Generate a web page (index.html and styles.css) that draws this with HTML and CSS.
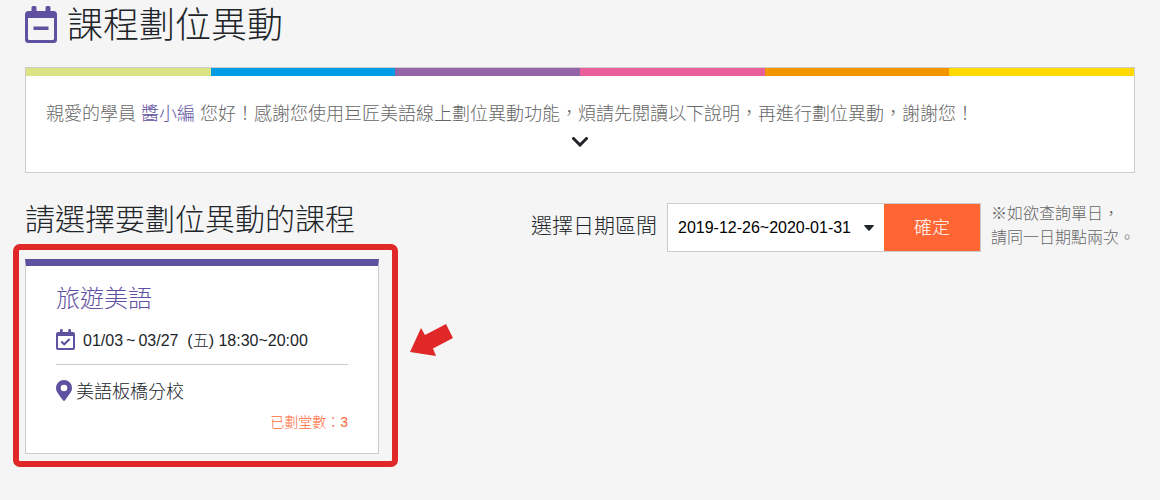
FILE: index.html
```html
<!DOCTYPE html>
<html lang="zh-Hant-TW">
<head>
<meta charset="utf-8">
<title>課程劃位異動</title>
<meta name="viewport" content="width=device-width, initial-scale=1">
<link rel="stylesheet" href="styles.css">
</head>
<body>
<main class="page">
  <header class="page-header">
    <svg class="page-icon" viewBox="0 0 32 37" aria-hidden="true">
      <path fill-rule="evenodd" d="M6.500 1.500Q6.500 0 8 0h2Q11.500 0 11.500 1.500V5h9V1.500Q20.500 0 22 0h2Q25.500 0 25.500 1.500V5h3Q32 5 32 8.500v25Q32 37 28.500 37h-25Q0 37 0 33.500v-25Q0 5 3.500 5h3zM3 12v20.500q0 1.500 1.500 1.500h23q1.500 0 1.500-1.500V12zM8.500 20.500h15v3.500h-15z"/>
    </svg>
    <h1 class="page-title">課程劃位異動</h1>
  </header>

  <section class="notice">
    <div class="stripes" aria-hidden="true">
      <span class="stripe lime"></span><span class="stripe blue"></span><span class="stripe purple"></span><span class="stripe pink"></span><span class="stripe orange"></span><span class="stripe yellow"></span>
    </div>
    <p class="notice-text">親愛的學員 <span class="student">醬小編</span> 您好！感謝您使用巨匠美語線上劃位異動功能，煩請先閱讀以下說明，再進行劃位異動，謝謝您！</p>
    <button class="expand" type="button" aria-label="展開說明">
      <svg class="chevron" viewBox="0 0 16 10" aria-hidden="true"><path d="M1.500 1.500L8 8l6.500-6.500"/></svg>
    </button>
  </section>

  <section class="toolbar">
    <h2 class="section-title">請選擇要劃位異動的課程</h2>
    <form class="filter">
      <label class="filter-label" for="range">選擇日期區間</label>
      <div class="range-group">
        <div class="select-wrap">
          <select class="range" id="range"><option>2019-12-26~2020-01-31</option></select>
          <svg class="caret" viewBox="0 0 10 6" aria-hidden="true"><path d="M.8 0h8.400q1.200 0 .4 1L5.700 5.500q-.7.700-1.400 0L.4 1Q-.4 0 .8 0z"/></svg>
        </div>
        <button class="submit" type="button">確定</button>
      </div>
      <p class="hint">※如欲查詢單日，<br>請同一日期點兩次。</p>
    </form>
  </section>

  <div class="courses">
    <article class="course">
      <h3 class="course-title">旅遊美語</h3>
      <p class="schedule">
        <svg class="date-icon" viewBox="0 0 19 21" aria-hidden="true">
          <path fill-rule="evenodd" d="M4 1q0-1 1-1h.7q1 0 1 1v2h5.600V1q0-1 1-1h.7q1 0 1 1v2h2q2 0 2 2v14q0 2-2 2H2q-2 0-2-2V5q0-2 2-2h2zM2 7v11.500q0 .5.500.5h14q.5 0 .5-.5V7z"/>
          <path class="tick" d="M5.300 12.500l2.900 2.800 5.500-5.300"/>
        </svg>
        <span>01/03<span class="tilde">~</span>03/27&nbsp; (五) 18:30~20:00</span>
      </p>
      <p class="school">
        <svg class="pin-icon" viewBox="0 0 16 21" aria-hidden="true">
          <path fill-rule="evenodd" d="M8 0a8 8 0 0 1 8 8c0 3-1.500 5-7.200 12.600q-.8.800-1.600 0C1.500 13 0 11 0 8a8 8 0 0 1 8-8zM8 4.700a3.300 3.300 0 1 0 0 6.600 3.300 3.300 0 0 0 0-6.600z"/>
        </svg>
        <span>美語板橋分校</span>
      </p>
      <p class="booked">已劃堂數：3</p>
      <svg class="pointer" viewBox="0 0 43 33" aria-hidden="true"><path d="M0 28L11 4l4 7L36 0l7 14-20 10.500 3 7.500z"/></svg>
    </article>
  </div>
</main>
</body>
</html>
```
FILE: styles.css
```css
* {
  box-sizing: border-box;
}

body,
h1,
h2,
h3,
p {
  margin: 0;
}

body {
  background: #f5f5f5;
  color: #212529;
  font-family: "Liberation Sans", "Noto Sans CJK TC", sans-serif;
  font-size: 16px;
  font-weight: 300;
  line-height: 24px;
}

button,
select {
  font: inherit;
}

.page {
  padding: 4px 25px 32px;
}

.page-header {
  display: flex;
  align-items: flex-start;
  gap: 10px;
}

.page-icon {
  width: 32px;
  height: 37px;
  margin-top: 2px;
  fill: #5f519f;
}

.page-title {
  font-size: 36px;
  font-weight: 300;
  line-height: 44px;
}

.notice {
  margin-top: 19px;
  background: #fff;
  border: 1px solid #ccc;
}

.stripes {
  display: flex;
  height: 8px;
}

.stripe {
  flex: 1;
}

.lime { background: #dae484; }
.blue { background: #009de6; }
.purple { background: #9364a6; }
.pink { background: #e85f9b; }
.orange { background: #f29500; }
.yellow { background: #ffd900; }

.notice-text {
  padding: 26px 20px 0;
  color: #666;
  font-size: 18px;
}

.student {
  color: #5f519f;
}

.expand {
  display: flex;
  justify-content: center;
  width: 100%;
  padding: 11px 0 25px;
  border: 0;
  background: none;
}

.chevron {
  width: 16px;
  height: 10px;
  fill: none;
  stroke: #212529;
  stroke-width: 3;
  stroke-linecap: round;
}

.toolbar {
  display: flex;
  flex-wrap: wrap;
  justify-content: space-between;
  margin-top: 29px;
}

.section-title {
  font-size: 30px;
  font-weight: 300;
  line-height: 36px;
}

.filter {
  display: flex;
  align-items: flex-start;
  gap: 10px;
}

.filter-label {
  font-size: 21px;
  line-height: 48px;
}

.range-group {
  display: flex;
  margin-top: 1px;
  border: 1px solid #ccc;
}

.select-wrap {
  display: grid;
  align-items: center;
}

.range,
.caret {
  grid-area: 1 / 1;
}

.range {
  height: 47px;
  padding: 0 32px 0 10px;
  border: 0;
  background: #fff;
  color: #000;
  appearance: none;
}

.caret {
  justify-self: end;
  width: 10px;
  height: 6px;
  margin-right: 10px;
  fill: #212529;
  pointer-events: none;
}

.submit {
  padding: 0 30px;
  border: 0;
  background: #ff6633;
  color: #fff;
  font-size: 18px;
}

.hint {
  color: #666;
}

.courses {
  display: grid;
  grid-template-columns: repeat(auto-fill, minmax(354px, 1fr));
  gap: 24px;
  margin-top: 7px;
}

.course {
  position: relative;
  padding: 21px 30px;
  background: #fff;
  border: 1px solid #ccc;
  border-top: 7px solid #5f519f;
}

.course::after {
  content: "";
  position: absolute;
  inset: -22px -20px -14px -13px;
  border: 6px solid #e02828;
  border-radius: 7px;
  pointer-events: none;
}

.course-title {
  color: #5f519f;
  font-size: 24px;
  font-weight: 300;
  line-height: 24px;
}

.schedule {
  display: flex;
  align-items: flex-start;
  gap: 8px;
  padding: 18px 0 11px;
  border-bottom: 1px solid #ccc;
}

.tilde {
  margin: 0 3px;
}

.date-icon {
  width: 19px;
  height: 21px;
  fill: #5f519f;
}

.tick {
  fill: none;
  stroke: #5f519f;
  stroke-width: 2;
}

.school {
  display: flex;
  align-items: flex-start;
  gap: 4px;
  margin-top: 15px;
  font-size: 18px;
}

.pin-icon {
  width: 16px;
  height: 21px;
  fill: #5f519f;
}

.booked {
  margin-top: 8px;
  color: #ff6633;
  font-size: 14px;
  line-height: 20px;
  text-align: right;
}

.pointer {
  position: absolute;
  top: 58px;
  left: calc(100% + 32px);
  width: 43px;
  height: 33px;
  fill: #e02828;
}
```
